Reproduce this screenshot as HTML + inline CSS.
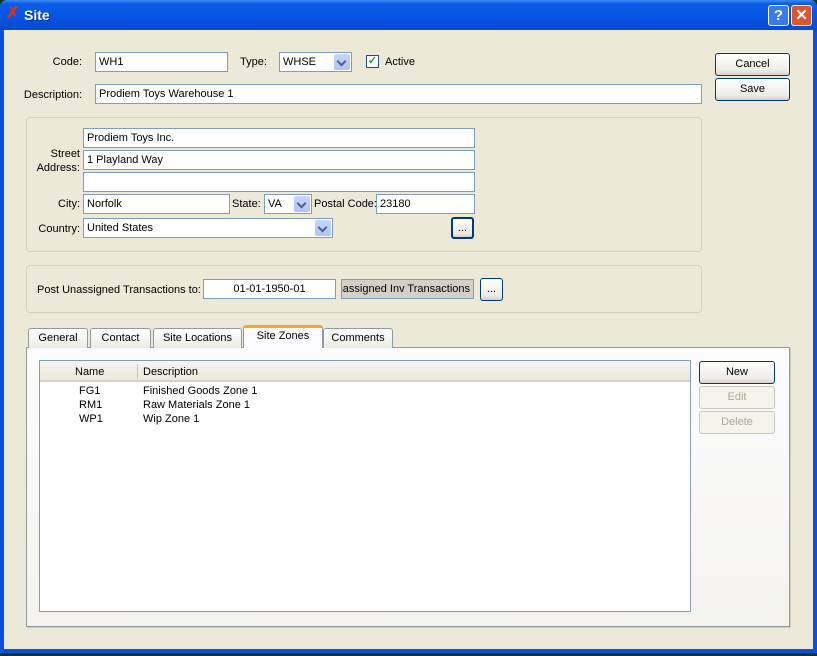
<!DOCTYPE html>
<html><head><style>
*{box-sizing:border-box;margin:0;padding:0}
body{width:817px;height:656px;position:relative;overflow:hidden;background:#0a3a10;font-family:"Liberation Sans",sans-serif;font-size:11px;color:#000}
.a{position:absolute}
.win{left:0;top:0;width:817px;height:653px;background:#0750e0;border-radius:7px 7px 0 0}
.title{left:0;top:0;width:817px;height:30px;border-radius:7px 7px 0 0;background:linear-gradient(#3b8cf5 0,#0a5ce8 12%,#0554e3 60%,#0749d0 100%)}
.body{left:4px;top:30px;width:809px;height:619px;background:#ECE9D8}
.in{background:#fff;border:1px solid #7f9db9;padding:2px 3px;white-space:nowrap;overflow:hidden;line-height:14px}
.cb{background:#fff;border:1px solid #7f9db9;padding:2px 3px;line-height:14px}
.dd{position:absolute;right:1px;top:1px;bottom:1px;width:16px;background:linear-gradient(#c6d6fc,#aec4f6);border-radius:2px}
.dd:after{content:"";position:absolute;left:4px;top:4px;width:5px;height:5px;border-right:2px solid #4d6185;border-bottom:2px solid #4d6185;transform:rotate(45deg)}
.btn{border:1px solid #003c74;border-radius:3px;background:linear-gradient(#fff,#ecebe6 80%,#d6d0c5);text-align:center;line-height:20px}
.dis{border-color:#c9c7ba;color:#aca899;background:#f5f4ea}
.grp{border:1px solid #d0d0bf;border-radius:4px}
.lbl{text-align:right;white-space:nowrap}
.tab{border:1px solid #919b9c;border-bottom:none;border-radius:3px 3px 0 0;background:linear-gradient(#fff,#ecebe5);text-align:center;line-height:19px}
</style></head><body>
<div class="a win"></div>
<div class="a title"></div>
<div class="a" style="left:6px;top:7px;color:#e03010;font-weight:bold;font-size:16px;line-height:14px">&#10007;</div>
<div class="a" style="left:24px;top:7px;color:#fff;font-weight:bold;font-size:14px;text-shadow:1px 1px #0a2a8a">Site</div>
<div class="a" style="left:768px;top:5px;width:21px;height:21px;border:1px solid #fff;border-radius:3px;background:#3a78ee;color:#fff;font-weight:bold;font-size:15px;text-align:center;line-height:19px">?</div>
<div class="a" style="left:791px;top:5px;width:21px;height:21px;border:1px solid #fff;border-radius:3px;background:#e0542c;color:#fff;font-weight:bold;font-size:15px;text-align:center;line-height:19px">&#10005;</div>
<div class="a body"></div>

<div class="a lbl" style="left:20px;top:56px;width:62px">Code:</div>
<div class="a in" style="left:95px;top:52px;width:133px;height:20px">WH1</div>
<div class="a" style="left:240px;top:56px">Type:</div>
<div class="a cb" style="left:279px;top:52px;width:73px;height:20px">WHSE<span class="dd"></span></div>
<div class="a" style="left:366px;top:55px;width:13px;height:13px;border:1px solid #1c5180;background:#fff;color:#21a121;font-size:11px;line-height:11px;text-align:center;font-weight:bold">&#10003;</div>
<div class="a" style="left:385px;top:56px">Active</div>
<div class="a lbl" style="left:10px;top:89px;width:72px">Description:</div>
<div class="a in" style="left:95px;top:84px;width:607px;height:20px">Prodiem Toys Warehouse 1</div>
<div class="a btn" style="left:715px;top:53px;width:75px;height:23px">Cancel</div>
<div class="a btn" style="left:715px;top:78px;width:75px;height:23px">Save</div>

<div class="a grp" style="left:26px;top:117px;width:676px;height:135px"></div>
<div class="a in" style="left:83px;top:128px;width:392px;height:20px">Prodiem Toys Inc.</div>
<div class="a in" style="left:83px;top:150px;width:392px;height:20px">1 Playland Way</div>
<div class="a in" style="left:83px;top:172px;width:392px;height:20px"></div>
<div class="a lbl" style="left:30px;top:147px;width:50px;line-height:14px">Street<br>Address:</div>
<div class="a lbl" style="left:30px;top:198px;width:50px">City:</div>
<div class="a in" style="left:83px;top:194px;width:147px;height:20px">Norfolk</div>
<div class="a" style="left:232px;top:198px">State:</div>
<div class="a cb" style="left:264px;top:194px;width:48px;height:20px">VA<span class="dd"></span></div>
<div class="a" style="left:314px;top:198px">Postal Code:</div>
<div class="a in" style="left:376px;top:194px;width:99px;height:20px">23180</div>
<div class="a lbl" style="left:20px;top:223px;width:60px">Country:</div>
<div class="a cb" style="left:83px;top:218px;width:250px;height:20px">United States<span class="dd"></span></div>
<div class="a btn" style="left:451px;top:217px;width:23px;height:22px;line-height:18px;border-width:2px">...</div>

<div class="a grp" style="left:26px;top:265px;width:676px;height:48px"></div>
<div class="a" style="left:37px;top:284px">Post Unassigned Transactions to:</div>
<div class="a in" style="left:203px;top:279px;width:133px;height:20px;text-align:center">01-01-1950-01</div>
<div class="a" style="left:341px;top:279px;width:133px;height:20px;background:#d4d0c8;border:1px solid #7f9db9;overflow:hidden;white-space:nowrap"><span class="a" style="right:3px;top:2px;line-height:14px">Unassigned Inv Transactions</span></div>
<div class="a btn" style="left:480px;top:278px;width:23px;height:23px;line-height:20px">...</div>

<div class="a" style="left:26px;top:347px;width:764px;height:280px;border:1px solid #919b9c;background:linear-gradient(#fcfcfe,#f4f3ee);box-shadow:1px 1px 0 #d0cdbf"></div>
<div class="a tab" style="left:28px;top:328px;width:60px;height:20px">General</div>
<div class="a tab" style="left:90px;top:328px;width:61px;height:20px">Contact</div>
<div class="a tab" style="left:153px;top:328px;width:89px;height:20px">Site Locations</div>
<div class="a tab" style="left:243px;top:325px;width:80px;height:23px;background:#fcfcfe;border-top:3px solid #f7a822;line-height:17px">Site Zones</div>
<div class="a tab" style="left:323px;top:328px;width:70px;height:20px">Comments</div>

<div class="a" style="left:39px;top:360px;width:652px;height:252px;border:1px solid #7f9db9;background:#fff"></div>
<div class="a" style="left:40px;top:361px;width:650px;height:21px;background:linear-gradient(#f6f5ee,#ebe9dc);border-bottom:2px solid #d6d2c2"></div>
<div class="a" style="left:137px;top:364px;width:1px;height:15px;background:#c7c5b2"></div>
<div class="a" style="left:75px;top:366px">Name</div>
<div class="a" style="left:143px;top:366px">Description</div>
<div class="a" style="left:79px;top:384px;line-height:14px">FG1<br>RM1<br>WP1</div>
<div class="a" style="left:143px;top:384px;line-height:14px">Finished Goods Zone 1<br>Raw Materials Zone 1<br>Wip Zone 1</div>

<div class="a btn" style="left:699px;top:361px;width:76px;height:23px">New</div>
<div class="a btn dis" style="left:699px;top:386px;width:76px;height:23px">Edit</div>
<div class="a btn dis" style="left:699px;top:411px;width:76px;height:23px">Delete</div>
</body></html>
